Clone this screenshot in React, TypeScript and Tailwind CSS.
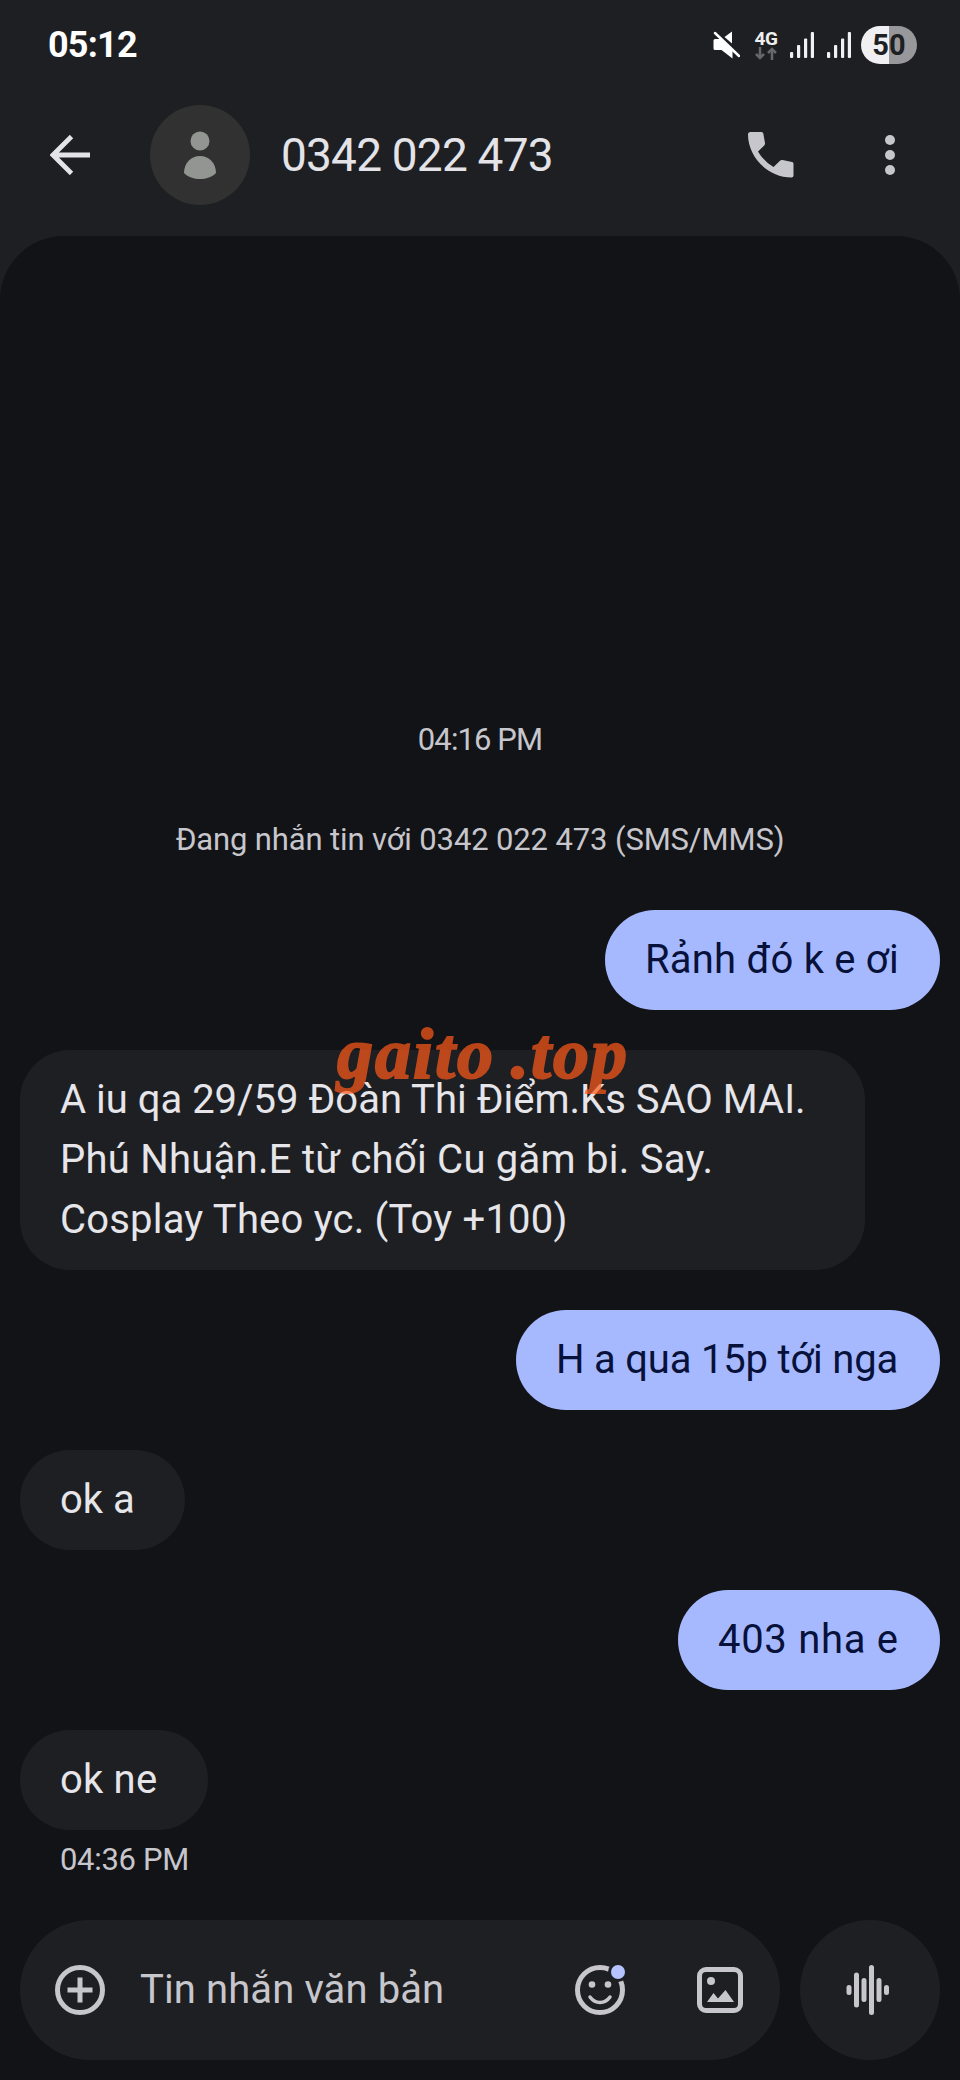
import type { ReactNode } from "react"
import clsx from "clsx"

const Signal = () => (
    <svg width="24" height="26" viewBox="0 0 24 26" fill="#f1f1f3">
        <rect x="0" y="20" width="3.200" height="6" rx="1" />
        <rect x="7" y="13" width="3.200" height="13" rx="1" />
        <rect x="14" y="6.500" width="3.200" height="19.500" rx="1" />
        <rect x="20.800" y="0" width="3.200" height="26" rx="1" />
    </svg>
)

const StatusBar = () => (
    <div className="flex h-[90px] items-center justify-between pl-12 pr-[43px]">
        <span className="text-[36px] font-bold leading-[40px] tracking-[-0.8px] text-white">05:12</span>
        <div className="flex h-[38px] items-center">
            <svg className="mr-[14px]" width="27" height="28" viewBox="0 0 27 28" fill="#fff">
                <path d="M2 8H9L19.500 18V27.500L8.500 19H2Q0.500 19 0.500 17.500V9.500Q0.500 8 2 8Z" />
                <path d="M11.500 6L19 0.500V12.500Z" />
                <path d="M2 2L26 25" stroke="#fff" strokeWidth="2.500" strokeLinecap="round" />
            </svg>
            <div className="mr-[12px] flex w-[24px] flex-col items-center">
                <span className="text-[19px] font-bold leading-[17px] tracking-[-0.5px] text-[#eee]">4G</span>
                <svg width="22" height="13" viewBox="0 0 22 13" fill="none" stroke="#66676a" strokeWidth="2.500">
                    <path d="M5 0V11M1 7L5 11L9 7M17 13V2M13 6L17 2L21 6" />
                </svg>
            </div>
            <Signal />
            <div className="w-[13px]" />
            <Signal />
            <div className="ml-[10px] flex h-[38px] w-[56px] items-center justify-center rounded-full bg-linear-to-r from-[#f0f0f2] from-50% to-[#98989b] to-50% text-[29px] font-bold leading-[38px] text-[#1e1f22]">50</div>
        </div>
    </div>
)

const TopBar = () => (
    <header className="flex h-[146px] items-start pl-[50px] pr-[65px] pt-[15px]">
        <svg className="mt-[30px]" width="40" height="40" viewBox="0 0 40 40" fill="none" stroke="#e3e3e8" strokeWidth="4.800">
            <path d="M40 20H4M21.500 1.500L3 20L21.500 38.500" />
        </svg>
        <svg className="ml-[60px]" width="100" height="100" viewBox="0 0 100 100">
            <circle cx="50" cy="50" r="50" fill="#303130" />
            <circle cx="50" cy="36" r="9.500" fill="#939593" />
            <path d="M34 68C34 58 41 51 50 51S66 58 66 68C62 72 56 74 50 74S38 72 34 68Z" fill="#939593" />
        </svg>
        <h1 className="ml-[31px] grow text-[46px] leading-[101px] tracking-[-0.8px] text-[#e3e3e8]">0342 022 473</h1>
        <svg className="mt-[27px]" width="46" height="46" viewBox="0 0 46 46" fill="#c7c6cc">
            <path d="M2.500 0H13.500Q15 0 15.300 1.500L17 11Q17.200 12.500 16.200 13.500L10 19.500Q15.500 29 25.500 35L32 28.700Q33 27.700 34.500 28L44 30Q45.500 30.300 45.500 31.800V43.500Q45.500 45.500 43.500 45.500C20 45.500 0 25 0 2.500Q0 0 2.500 0Z" />
        </svg>
        <svg className="ml-[91px] mt-[30px]" width="10" height="40" viewBox="0 0 10 40" fill="#c7c6cc">
            <circle cx="5" cy="5" r="5" />
            <circle cx="5" cy="20" r="5" />
            <circle cx="5" cy="35" r="5" />
        </svg>
    </header>
)

const Bubble = ({ mine, className, children }: { mine?: boolean; className: string; children: ReactNode }) => (
    <div
        className={clsx(
            "flex flex-col rounded-[50px] px-10 py-5 text-[40px] leading-[60px] whitespace-nowrap",
            mine ? "self-end bg-[#a6b9ff] text-[#07113a]" : "self-start bg-[#1e1f22] text-[#e5e5ea]",
            className
        )}
    >
        {children}
    </div>
)

const Composer = () => (
    <div className="mt-auto mb-5 flex gap-5 px-5">
        <div className="flex h-[140px] w-[760px] items-center rounded-full bg-[#1e1f22] pl-[35px] pr-[37px]">
            <svg width="50" height="50" viewBox="0 0 50 50" fill="none" stroke="#c7c6cc" strokeWidth="5">
                <circle cx="25" cy="25" r="22.500" />
                <path d="M25 12.500V37.500M12.500 25H37.500" />
            </svg>
            <span className="ml-[35px] grow text-[40px] tracking-[0.1px] text-[#c7c6cc]">Tin nhắn văn bản</span>
            <svg width="52" height="50" viewBox="0 0 52 50" fill="none" stroke="#c7c6cc">
                <circle cx="25" cy="25" r="22.500" strokeWidth="5" />
                <circle cx="17" cy="19.500" r="3.300" fill="#c7c6cc" stroke="none" />
                <circle cx="33" cy="19.500" r="3.300" fill="#c7c6cc" stroke="none" />
                <path d="M15 32Q19 37.500 25 37.500T35 32" strokeWidth="3.500" strokeLinecap="round" />
                <circle cx="43" cy="7" r="10" fill="#1e1f22" stroke="none" />
                <circle cx="43" cy="7" r="7" fill="#b5c4ff" stroke="none" />
            </svg>
            <svg className="ml-[70px]" width="46" height="46" viewBox="0 0 46 46" fill="#c7c6cc">
                <rect x="2.500" y="2.500" width="41" height="41" rx="6.500" fill="none" stroke="#c7c6cc" strokeWidth="5" />
                <circle cx="14" cy="14" r="4" />
                <path d="M10 35L16.500 26L21 31.500L28.500 23L37 35Z" />
            </svg>
        </div>
        <div className="flex size-[140px] items-center justify-center rounded-full bg-[#1e1f22]">
            <svg className="-ml-1" width="44" height="50" viewBox="0 0 44 50" fill="none" stroke="#c7c6cc" strokeWidth="5" strokeLinecap="round">
                <path d="M3 22.500V27.500M10.500 10V40M18 15.500V34.500M25.500 2.500V47.500M33 15.500V34.500M40.500 22.500V27.500" />
            </svg>
        </div>
    </div>
)

export default function App() {
    return (
        <div className="flex h-[2080px] w-[960px] flex-col bg-[#1e1f22] font-['Roboto',sans-serif]">
            <StatusBar />
            <TopBar />
            <main className="flex grow flex-col rounded-t-[64px] bg-[#121316]">
                <div className="mt-[484px] text-center text-[31px] leading-[40px] tracking-[-0.9px] text-[#c7c6cc]">04:16 PM</div>
                <div className="mt-[60px] text-center text-[31px] leading-[40px] tracking-[-0.13px] text-[#c7c6cc]">Đang nhắn tin với 0342 022 473 (SMS/MMS)</div>
                <div className="mt-[50px] flex flex-col gap-10 px-5">
                    <Bubble mine className="w-[335px] tracking-[0.2px]">Rảnh đó k e ơi</Bubble>
                    <div className="relative flex flex-col">
                        <Bubble className="w-[845px]">
                            <span>A iu qa 29/59 Đoàn Thi Điểm.Ks SAO MAI.</span>
                            <span className="tracking-[0.25px]">Phú Nhuận.E từ chối Cu găm bi. Say.</span>
                            <span className="tracking-[0.2px]">Cosplay Theo yc. (Toy +100)</span>
                        </Bubble>
                        <span className="absolute left-[317px] -top-[36px] text-[72px] font-bold italic leading-[80px] tracking-[2px] [word-spacing:-4px] whitespace-nowrap text-[#ff5a1a] opacity-70 [-webkit-text-stroke:2px_#ff5a1a] font-['Liberation_Serif',serif]">gaito .top</span>
                    </div>
                    <Bubble mine className="w-[424px] tracking-[-0.2px]">H a qua 15p tới nga</Bubble>
                    <Bubble className="w-[165px]">ok a</Bubble>
                    <Bubble mine className="w-[262px] tracking-[0.7px]">403 nha e</Bubble>
                    <Bubble className="w-[188px] tracking-[0.2px]">ok ne</Bubble>
                </div>
                <div className="mt-[10px] pl-[60px] text-[31px] leading-[40px] tracking-[-0.3px] text-[#c7c6cc]">04:36 PM</div>
                <Composer />
            </main>
        </div>
    )
}
